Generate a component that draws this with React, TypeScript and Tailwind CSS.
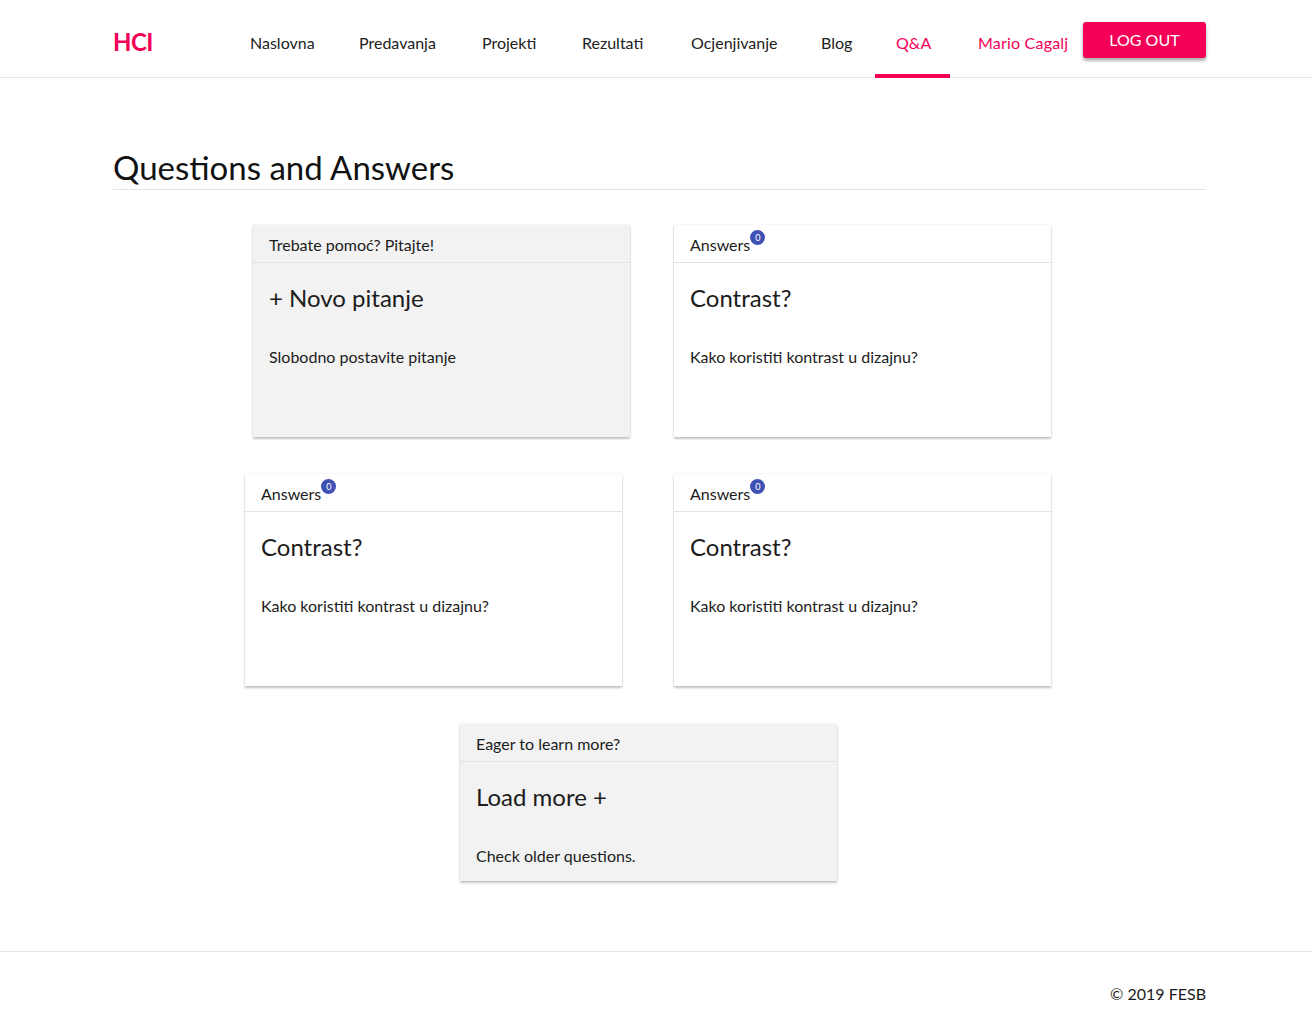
const navItems = [
  { label: 'Naslovna', width: 'w-[109px]' },
  { label: 'Predavanja', width: 'w-[123px]' },
  { label: 'Projekti', width: 'w-[100px]' },
  { label: 'Rezultati', width: 'w-[109px]' },
  { label: 'Ocjenjivanje', width: 'w-[130px]' },
  { label: 'Blog', width: 'w-[75px]' },
  { label: 'Q&A', width: 'w-[75px]' },
]

function Header() {
  return (
    <header className="h-[78px] bg-white border-b border-[#e6e6e6]">
      <div className="ml-[113px] w-[1093px] h-full flex items-center">
        <span className="w-[116px] text-[24px] font-bold text-[#f50057] tracking-tight mt-[6px]">HCI</span>
        <nav className="flex h-full items-stretch">
          {navItems.map((item) => {
            const active = item.label === 'Q&A'
            return (
              <a
                key={item.label}
                className={
                  (active ? 'text-[#f50057] ' : 'text-[#212121] ') +
                  item.width +
                  ' relative flex items-center pl-[21px] pt-[8px] text-[16px]'
                }
              >
                {item.label}
                {active && <span className="absolute left-0 right-0 bottom-[-1px] h-[4px] bg-[#f50057]" />}
              </a>
            )
          })}
          <a className="flex items-center pl-[28px] pt-[8px] text-[16px] tracking-[0.2px] text-[#f50057]">Mario Cagalj</a>
        </nav>
        <button className="ml-auto mt-[2px] h-[36px] w-[123px] rounded-[3px] bg-[#f50057] text-white text-[16px] uppercase shadow-[0_3px_3px_rgba(0,0,0,0.25),0_1px_5px_rgba(0,0,0,0.12)]">
          Log out
        </button>
      </div>
    </header>
  )
}

function Badge() {
  return (
    <span className="absolute right-[-15px] top-[-4px] flex h-[15px] w-[15px] items-center justify-center rounded-full bg-[#3f51b5] text-[9px] leading-none text-white">
      0
    </span>
  )
}

type CardProps = {
  top: string
  title: string
  text: string
  gray?: boolean
  badge?: boolean
  tall?: boolean
}

function Card({ top, title, text, gray, badge, tall }: CardProps) {
  return (
    <div
      className={
        (gray ? 'bg-[#f2f2f2] ' : 'bg-white ') +
        (tall ? 'h-[212px] ' : '') +
        'w-[377px] shadow-[0_2px_2px_rgba(0,0,0,0.22),0_0_2px_rgba(0,0,0,0.1)]'
      }
    >
      <div className="h-[38px] border-b border-[#e3e3e3] px-4 pt-[9px] text-[16px] leading-[22px] text-[#1c1c1c]">
        <span className="relative inline-block">
          {top}
          {badge && <Badge />}
        </span>
      </div>
      <div className="px-4 pt-[15px] pb-[14px]">
        <div className="text-[24px] leading-[40px] text-[#1c1c1c]">{title}</div>
        <div className="mt-[28px] text-[16px] leading-[22px] text-[#1c1c1c]">{text}</div>
      </div>
    </div>
  )
}

export default function App() {
  return (
    <div className="min-h-[1029px] bg-white flex flex-col" style={{ fontFamily: 'Lato, "Open Sans", sans-serif' }}>
      <Header />
      <main className="ml-[113px] w-[1093px] flex-1">
        <h1 className="pt-[68px] border-b border-[#e3e3e3] text-[33px] leading-[43px] text-[#111]">
          Questions and Answers
        </h1>
        <div className="mt-[35px] flex gap-[44px] ml-[140px]">
          <Card tall gray top="Trebate pomoć? Pitajte!" title="+ Novo pitanje" text="Slobodno postavite pitanje" />
          <Card tall badge top="Answers" title="Contrast?" text="Kako koristiti kontrast u dizajnu?" />
        </div>
        <div className="mt-[37px] flex gap-[52px] ml-[132px]">
          <Card tall badge top="Answers" title="Contrast?" text="Kako koristiti kontrast u dizajnu?" />
          <Card tall badge top="Answers" title="Contrast?" text="Kako koristiti kontrast u dizajnu?" />
        </div>
        <div className="mt-[38px] ml-[347px] pb-[69px]">
          <Card gray top="Eager to learn more?" title="Load more +" text="Check older questions." />
        </div>
      </main>
      <footer className="h-[78px] border-t border-[#e6e6e6]">
        <div className="ml-[113px] w-[1093px] pt-[30px] text-right text-[16px] text-[#1c1c1c]">© 2019 FESB</div>
      </footer>
    </div>
  )
}
